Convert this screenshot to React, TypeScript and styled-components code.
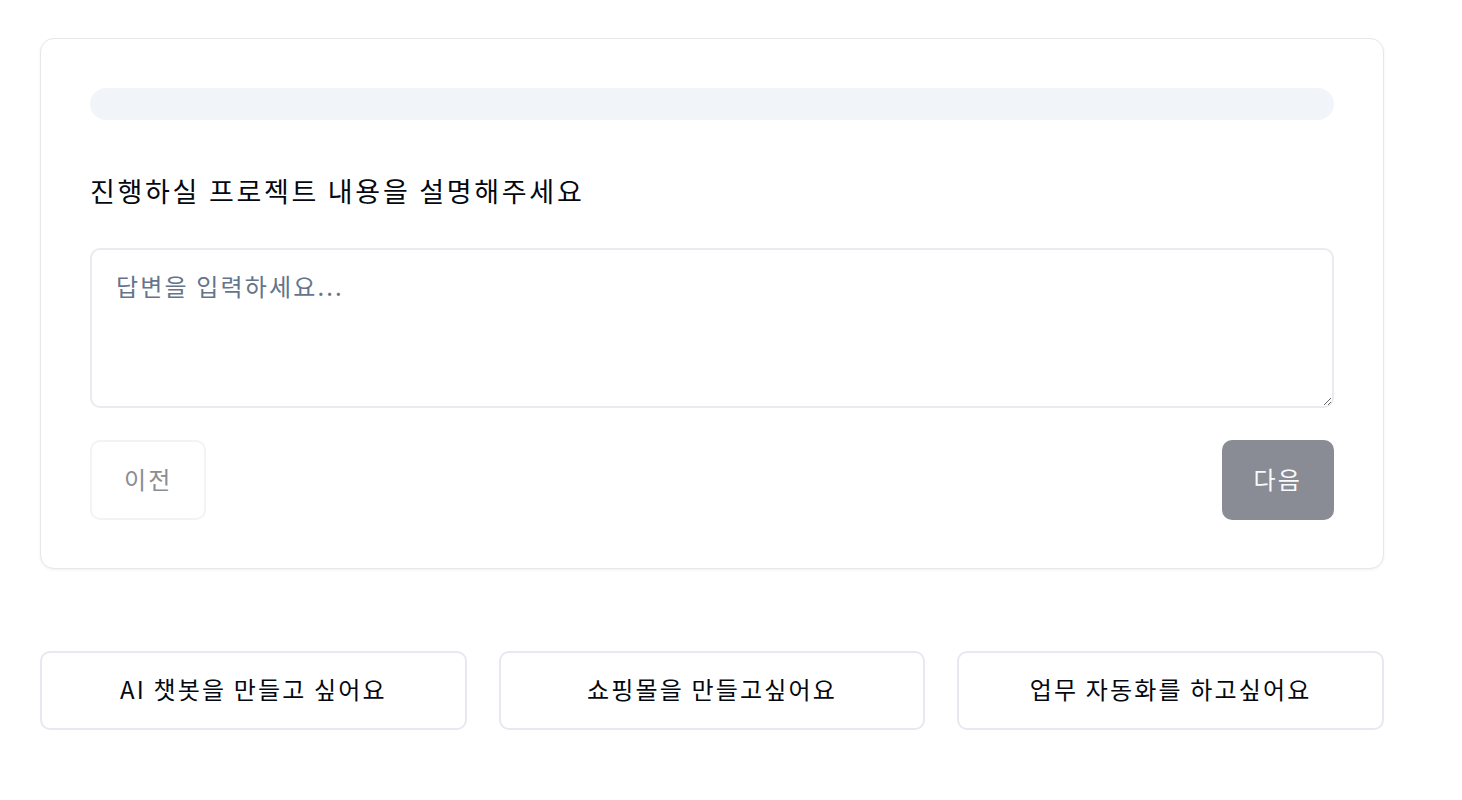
import React, { useState } from 'react';
import styled, { createGlobalStyle } from 'styled-components';

const GlobalStyle = createGlobalStyle`
  html, body {
    margin: 0;
    padding: 0;
    background: #ffffff;
    font-family: "Noto Sans CJK KR", "Noto Sans", sans-serif;
    color: #111827;
  }
  * { box-sizing: border-box; }
`;

const SUGGESTIONS = ['AI 챗봇을 만들고 싶어요', '쇼핑몰을 만들고싶어요', '업무 자동화를 하고싶어요'];

const Page = styled.div`
  width: 1344px;
  margin: 38px 0 0 40px;
  display: flex;
  flex-direction: column;
  gap: 82px;
`;

const Card = styled.section`
  border: 1px solid #e5e7eb;
  border-radius: 14px;
  padding: 49px 49px 48px;
  background: #fff;
  box-shadow: 0 1px 3px rgba(15, 23, 42, 0.06);
  display: flex;
  flex-direction: column;
`;

const Progress = styled.div`
  height: 32px;
  border-radius: 999px;
  background: #f1f5f9;
  overflow: hidden;
`;

const ProgressFill = styled.div`
  height: 100%;
  background: #111827;
  border-radius: 999px;
`;

const Question = styled.h2`
  margin: 51px 0 0;
  font-size: 27px;
  line-height: 40px;
  font-weight: 400;
  letter-spacing: 0.1em;
  color: #05080f;
`;

const Answer = styled.textarea`
  margin-top: 37px;
  height: 160px;
  width: 100%;
  padding: 18px 24px;
  border: 2px solid #e8ebf0;
  border-radius: 10px;
  font-family: inherit;
  font-size: 24px;
  line-height: 36px;
  letter-spacing: 0.09em;
  color: #111827;
  outline: none;
  &::placeholder {
    color: #64748b;
  }
`;

const Actions = styled.div`
  margin-top: 32px;
  display: flex;
  justify-content: space-between;
`;

const NavButton = styled.button<{ $primary?: boolean }>`
  height: 80px;
  padding: 0 ${p => (p.$primary ? 30 : 32)}px 4px;
  border-radius: 10px;
  font-family: inherit;
  font-size: 24px;
  letter-spacing: 0.09em;
  border: 2px solid ${p => (p.$primary ? 'transparent' : '#f2f3f5')};
  background: ${p => (p.$primary ? '#898c94' : '#ffffff')};
  color: ${p => (p.$primary ? '#f9fafb' : '#8a8d94')};
  cursor: not-allowed;
`;

const Suggestions = styled.div`
  display: grid;
  grid-template-columns: repeat(3, 1fr);
  gap: 32px;
`;

const Suggestion = styled.button`
  height: 79px;
  padding: 0 0 4px;
  border: 2px solid #e6e9ef;
  border-radius: 10px;
  background: #fff;
  font-family: inherit;
  font-size: 24px;
  font-weight: 400;
  letter-spacing: 0.09em;
  color: #05080f;
  cursor: pointer;
`;

export default function App() {
    const [answer, setAnswer] = useState('');
    const progress = 0;

    return (
        <>
            <GlobalStyle />
            <Page>
                <Card>
                    <Progress>
                        <ProgressFill style={{ width: `${progress}%` }} />
                    </Progress>
                    <Question>진행하실 프로젝트 내용을 설명해주세요</Question>
                    <Answer
                        placeholder="답변을 입력하세요..."
                        value={answer}
                        onChange={e => setAnswer(e.target.value)}
                    />
                    <Actions>
                        <NavButton disabled>이전</NavButton>
                        <NavButton $primary disabled={!answer}>다음</NavButton>
                    </Actions>
                </Card>
                <Suggestions>
                    {SUGGESTIONS.map(s => (
                        <Suggestion key={s} onClick={() => setAnswer(s)}>{s}</Suggestion>
                    ))}
                </Suggestions>
            </Page>
        </>
    );
}
